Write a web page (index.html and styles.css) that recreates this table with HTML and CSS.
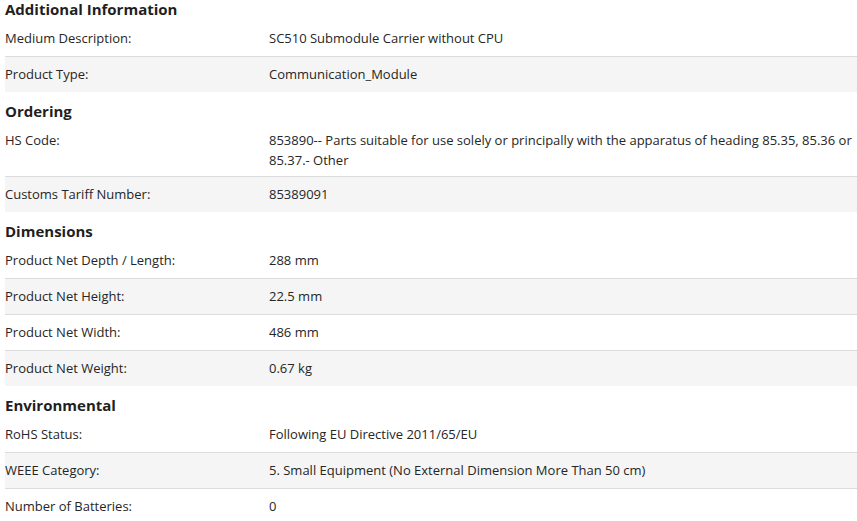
FILE: index.html
```html
<!DOCTYPE html>
<html lang="en">
<head>
<meta charset="utf-8">
<title>Product details</title>
<link rel="stylesheet" href="styles.css">
</head>
<body>
<main class="specs">
  <section class="group">
    <h2 class="group-title">Additional Information</h2>
    <div class="row"><div class="label">Medium Description:</div><div class="value">SC510 Submodule Carrier without CPU</div></div>
    <div class="row"><div class="label">Product Type:</div><div class="value">Communication_Module</div></div>
  </section>
  <section class="group">
    <h2 class="group-title">Ordering</h2>
    <div class="row"><div class="label">HS Code:</div><div class="value">853890-- Parts suitable for use solely or principally with the apparatus of heading 85.35, 85.36 or 85.37.- Other</div></div>
    <div class="row"><div class="label">Customs Tariff Number:</div><div class="value">85389091</div></div>
  </section>
  <section class="group">
    <h2 class="group-title">Dimensions</h2>
    <div class="row"><div class="label">Product Net Depth / Length:</div><div class="value">288 mm</div></div>
    <div class="row"><div class="label">Product Net Height:</div><div class="value">22.5 mm</div></div>
    <div class="row"><div class="label">Product Net Width:</div><div class="value">486 mm</div></div>
    <div class="row"><div class="label">Product Net Weight:</div><div class="value">0.67 kg</div></div>
  </section>
  <section class="group">
    <h2 class="group-title">Environmental</h2>
    <div class="row"><div class="label">RoHS Status:</div><div class="value">Following EU Directive 2011/65/EU</div></div>
    <div class="row"><div class="label">WEEE Category:</div><div class="value">5. Small Equipment (No External Dimension More Than 50 cm)</div></div>
    <div class="row"><div class="label">Number of Batteries:</div><div class="value">0</div></div>
  </section>
</main>
</body>
</html>
```
FILE: styles.css
```css
* { box-sizing: border-box; }
html, body { margin: 0; padding: 0; background: #ffffff; overflow: hidden; }
body {
  font-family: "Open Sans", "Noto Sans", sans-serif;
  font-size: 13px;
  color: #262626;
}
.specs {
  padding-left: 5px;
  display: flex;
  flex-direction: column;
}
.group { display: flex; flex-direction: column; }
.group + .group .group-title { margin-top: 10px; }
.group-title {
  margin: 0 0 3px;
  font-size: 15px;
  font-weight: 700;
  line-height: 18px;
  color: #1f1f1f;
}
.row {
  display: grid;
  grid-template-columns: 264px 1fr;
  align-items: start;
  min-height: 36px;
  padding: 7px 0 6px;
  line-height: 20px;
  border-bottom: 1px solid #dcdcdc;
}
.row:nth-of-type(even) { background: #f5f5f5; }
.row:last-child { border-bottom: none; min-height: 35px; }
.label, .value { margin: 0; }
```
